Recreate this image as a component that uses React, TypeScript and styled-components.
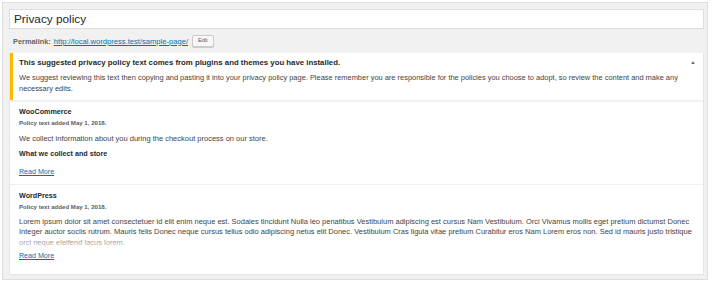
import styled, { createGlobalStyle } from 'styled-components';

/* Styles */
const GlobalStyle = createGlobalStyle`
  html, body {
    margin: 0;
    padding: 0;
    background: #ffffff;
  }

  body {
    font-family: 'Liberation Sans', Arial, sans-serif;
    color: #444444;
    -webkit-font-smoothing: antialiased;
  }
`;

const EditorFrame = styled.div`
  width: 706px;
  margin: 2px 0 0 2px;
  box-sizing: border-box;
  border: 1px solid #dddddd;
  background: #f1f1f1;
  padding: 6px 3px 4px 6px;

  display: flex;
  flex-direction: column;

  & > * {
    flex-shrink: 0;
  }
`;

const TitleInput = styled.div`
  height: 20px;
  box-sizing: border-box;
  border: 1px solid #dddddd;
  background: #ffffff;
  padding-left: 4px;

  display: flex;
  align-items: center;

  font-size: 11.8px;
  color: #23282d;
`;

const PermalinkRow = styled.div`
  height: 14px;
  margin-top: 5px;
  padding-left: 4px;

  display: flex;
  align-items: center;
  gap: 3px;

  font-size: 7.4px;
  color: #666666;

  strong {
    font-weight: 700;
  }

  a {
    color: #0073aa;
    text-decoration: underline;
    font-size: 7.6px;
  }
`;

const SmallButton = styled.button`
  height: 12px;
  padding: 0 5px;
  margin-left: 1px;
  border: 1px solid #cccccc;
  border-radius: 2px;
  background: #f7f7f7;
  box-shadow: 0 1px 0 #cccccc;
  font-family: inherit;
  font-size: 5.5px;
  color: #555555;
  line-height: 1;
`;

const Panel = styled.div`
  margin-top: 5px;
  border: 1px solid #e5e5e5;
  border-top: none;
  background: #f1f1f1;

  display: flex;
  flex-direction: column;
  gap: 2px;
`;

const Notice = styled.div`
  position: relative;
  background: #ffffff;
  border-left: 3px solid #ffb900;
  padding: 5px 12px 6px 6px;

  h2 {
    margin: 0;
    font-size: 7.8px;
    line-height: 10px;
    font-weight: 700;
    color: #23282d;
  }

  p {
    margin: 4px 0 0;
    font-size: 7.44px;
    line-height: 11px;
    color: #444444;
  }
`;

const CollapseArrow = styled.span`
  position: absolute;
  top: 8px;
  right: 8px;
  width: 0;
  height: 0;
  border-left: 2.5px solid transparent;
  border-right: 2.5px solid transparent;
  border-bottom: 3px solid #72777c;
`;

const PolicyList = styled.div`
  background: #ffffff;
  display: flex;
  flex-direction: column;
`;

const PolicySection = styled.section<{ $last?: boolean }>`
  padding: ${(p) => (p.$last ? '6px 9px 13px' : '5px 9px 7px')};
  border-bottom: ${(p) => (p.$last ? 'none' : '1px solid #eeeeee')};

  h3 {
    margin: 0;
    font-size: 7.2px;
    line-height: 10px;
    font-weight: 700;
    color: #23282d;
  }
`;

const AddedDate = styled.div`
  font-size: 6.1px;
  line-height: 8px;
  font-weight: 700;
  color: #555d66;
  margin-top: 2px;
`;

const PolicyText = styled.p`
  margin: 7px 0 0;
  font-size: 7.5px;
  line-height: 10px;
  color: #444444;
`;

const PolicySubhead = styled.div`
  margin-top: 5px;
  font-size: 7.2px;
  line-height: 10px;
  font-weight: 700;
  color: #23282d;
`;

const ClippedText = styled.div`
  position: relative;
  margin-top: 5.5px;
  height: 32px;
  overflow: hidden;
  font-size: 7.5px;
  line-height: 10.6px;
  color: #444444;

  &::after {
    content: '';
    position: absolute;
    left: 0;
    right: 0;
    bottom: 0;
    height: 13px;
    background: linear-gradient(rgba(255, 255, 255, 0.1), rgba(255, 255, 255, 0.9));
  }
`;

const ReadMore = styled.a<{ $gap: number }>`
  display: block;
  width: max-content;
  margin-top: ${(p) => p.$gap}px;
  font-size: 7.1px;
  line-height: 10px;
  color: #0073aa;
  text-decoration: underline;
`;

const lorem =
  'Lorem ipsum dolor sit amet consectetuer id elit enim neque est. Sodales tincidunt Nulla leo penatibus Vestibulum adipiscing est cursus Nam Vestibulum. Orci Vivamus mollis eget pretium dictumst Donec Integer auctor sociis rutrum. Mauris felis Donec neque cursus tellus odio adipiscing netus elit Donec. Vestibulum Cras ligula vitae pretium Curabitur eros Nam Lorem eros non. Sed id mauris justo tristique orci neque eleifend lacus lorem.';

function App() {
  return (
    <>
      <GlobalStyle />
      <EditorFrame>
        <TitleInput>Privacy policy</TitleInput>
        <PermalinkRow>
          <strong>Permalink:</strong>
          <a href="#">http://local.wordpress.test/sample-page/</a>
          <SmallButton type="button">Edit</SmallButton>
        </PermalinkRow>
        <Panel>
          <Notice>
            <h2>This suggested privacy policy text comes from plugins and themes you have installed.</h2>
            <p>
              We suggest reviewing this text then copying and pasting it into your privacy policy page. Please
              remember you are responsible for the policies you choose to adopt, so review the content and make
              any necessary edits.
            </p>
            <CollapseArrow />
          </Notice>
          <PolicyList>
            <PolicySection>
              <h3>WooCommerce</h3>
              <AddedDate>Policy text added May 1, 2018.</AddedDate>
              <PolicyText>We collect information about you during the checkout process on our store.</PolicyText>
              <PolicySubhead>What we collect and store</PolicySubhead>
              <ReadMore href="#" $gap={8}>
                Read More
              </ReadMore>
            </PolicySection>
            <PolicySection $last>
              <h3>WordPress</h3>
              <AddedDate>Policy text added May 1, 2018.</AddedDate>
              <ClippedText>{lorem}</ClippedText>
              <ReadMore href="#" $gap={2.5}>
                Read More
              </ReadMore>
            </PolicySection>
          </PolicyList>
        </Panel>
      </EditorFrame>
    </>
  );
}

export default App;
